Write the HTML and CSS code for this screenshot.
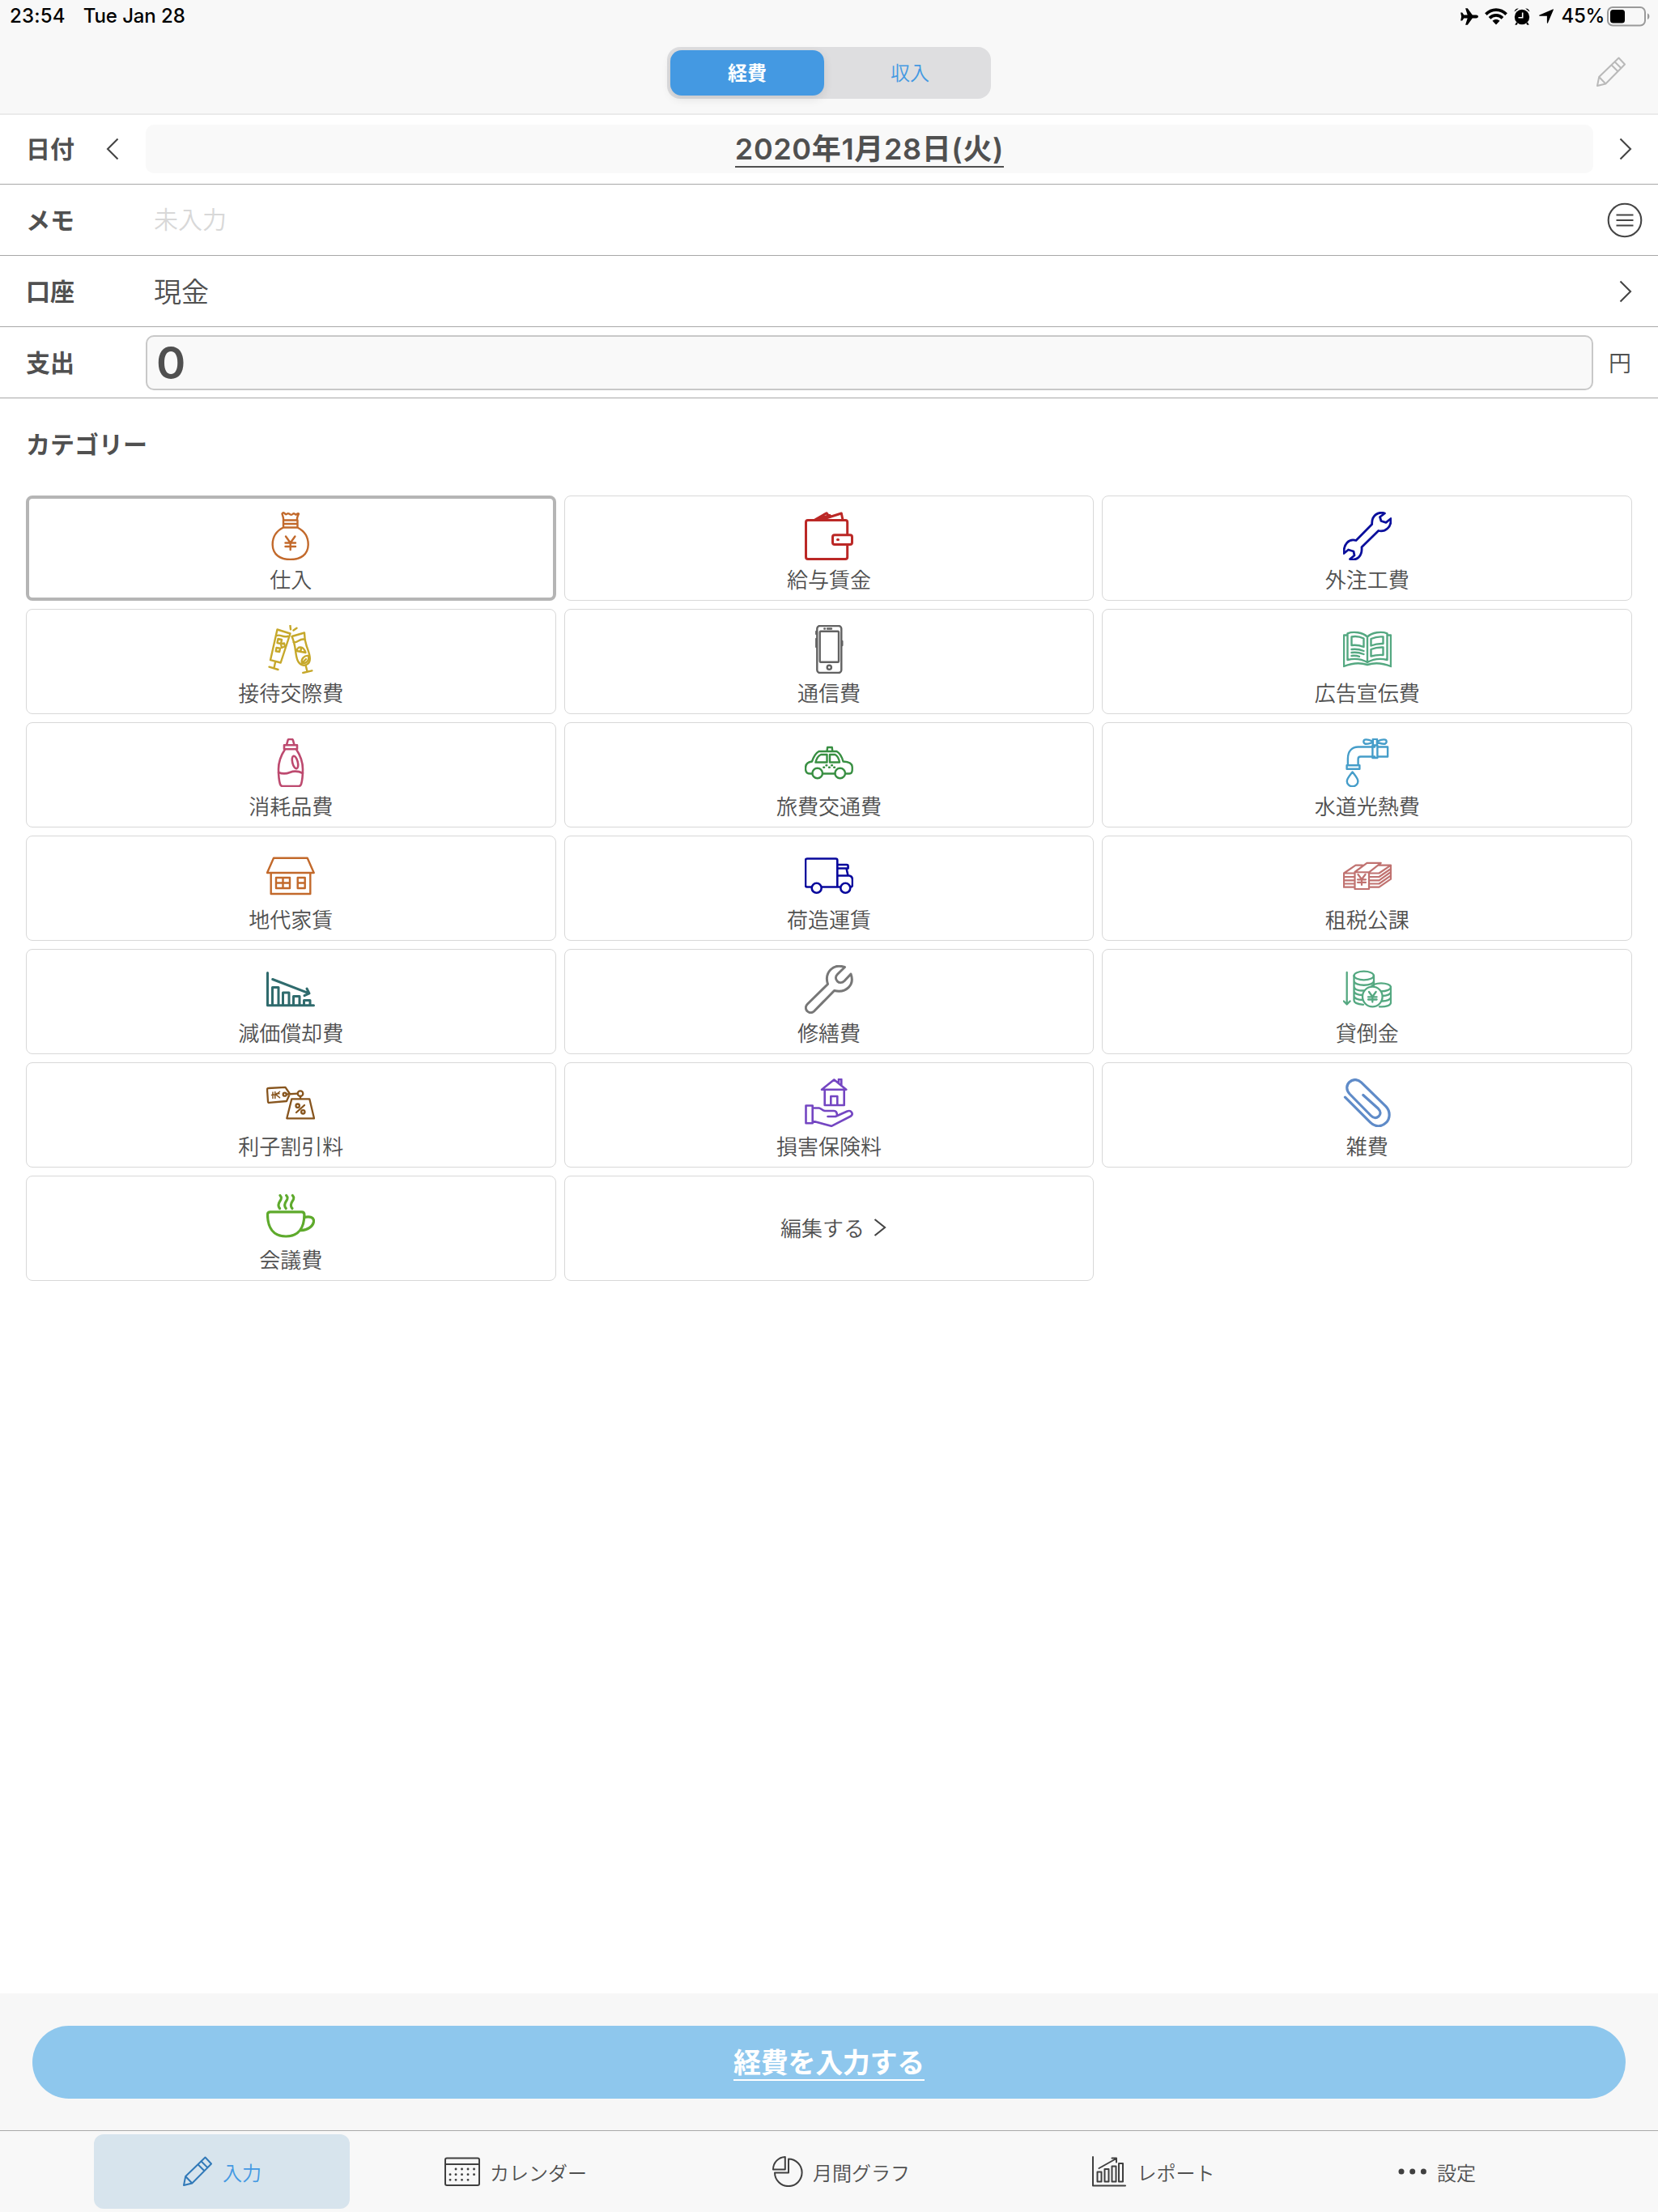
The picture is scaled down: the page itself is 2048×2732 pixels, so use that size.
FILE: index.html
```html
<!DOCTYPE html>
<html lang="ja">
<head>
<meta charset="utf-8">
<title>経費入力</title>
<link rel="stylesheet" href="styles.css">
</head>
<body>
<div class="app">
  <header class="header">
    <div class="status">
      <div class="status-left"><span class="clock">23:54</span><span class="day">Tue Jan 28</span></div>
      <div class="status-right">
        <svg class="plane" width="22" height="21" viewBox="0 0 22 21"><path d="M22 10.500c0-1.100-1.200-1.900-2.600-1.900h-4.600L8.800.3H6.100l2.600 8.300H4.300L2.200 5.500H.2l.9 5-.9 5h2l2.100-3.100h4.400l-2.600 8.300h2.700l6-8.300h4.600c1.400 0 2.600-.8 2.600-1.900z"/></svg>
        <svg class="wifi" width="28" height="21" viewBox="0 0 28 21"><g fill="none" stroke="#000" stroke-width="3.700"><path d="M1.400 7.600C8.500.3 19.500.3 26.600 7.600"/><path d="M6 12.400c4.500-4.600 11.500-4.600 16 0"/></g><path d="M9.500 15.800c2.600-2.400 6.400-2.400 9 0L14 20.600z"/></svg>
        <svg class="alarm" width="20" height="21" viewBox="0 0 20 21"><circle cx="10" cy="11" r="9.200"/><path d="M.6 4.500C.8 2 3 .1 5.800.5zM19.400 4.500C19.200 2 17 .1 14.200.5zM3 17.500l-1.700 3.300h2.200l1.500-2zM17 17.500l1.700 3.300h-2.200l-1.500-2z"/><path d="M10.700 5.500v6.300H5.500" fill="none" stroke="#fff" stroke-width="1.600"/></svg>
        <svg class="loc" width="18" height="18" viewBox="0 0 18 18"><path d="M17 .4c.7-.3 1.100.2.8.9L11 17.200c-.3.800-1.100.6-1.100-.2V9.300c0-.4-.1-.5-.5-.5H.9c-.9 0-1.100-.8-.2-1.200z"/></svg>
        <span class="percent">45%</span>
        <svg class="battery" width="54" height="25" viewBox="0 0 54 25"><rect x="1" y="1" width="46" height="22.500" rx="6" fill="none" stroke="#9a9a9a" stroke-width="2"/><rect x="4" y="4" width="18" height="16.500" rx="3.500"/><path d="M50 8.500c3.200.8 3.200 6.700 0 7.500z" fill="#9a9a9a"/></svg>
      </div>
    </div>
    <div class="nav">
      <div class="segment"><span class="seg active">経費</span><span class="seg">収入</span></div>
      <svg class="edit" width="38" height="38" viewBox="0 0 38 38"><g class="line"><path d="M2 36l2.200-11L28.500 1.500l7.500 8L12.300 33.500zM4.200 25l8.100 8.500M19.500 10.300l8 8M23.500 6.300l8 8"/></g></svg>
    </div>
  </header>

  <section class="form">
    <div class="row">
      <span class="label">日付</span>
      <svg class="prev" width="16" height="28" viewBox="0 0 16 28"><path d="M14.500 1.500L2 14l12.500 12.500"/></svg>
      <div class="date-field"><span class="date">2020年1月28日(火)</span></div>
      <svg class="next" width="16" height="28" viewBox="0 0 16 28"><path d="M1.500 1.500L14 14 1.500 26.500"/></svg>
    </div>
    <div class="row">
      <span class="label">メモ</span>
      <span class="memo">未入力</span>
      <svg class="list" width="44" height="44" viewBox="0 0 44 44"><circle cx="22" cy="22" r="20.300"/><path d="M11.500 15.500h21M11.500 22h21M11.500 28.500h21"/></svg>
    </div>
    <div class="row">
      <span class="label">口座</span>
      <span class="account">現金</span>
      <svg class="next" width="16" height="28" viewBox="0 0 16 28"><path d="M1.500 1.500L14 14 1.500 26.500"/></svg>
    </div>
    <div class="row">
      <span class="label">支出</span>
      <div class="amount">0</div>
      <span class="yen">円</span>
    </div>
  </section>

  <main class="categories">
    <h2 class="title">カテゴリー</h2>
    <div class="grid">
      <div class="card selected">
        <svg class="icon bag" viewBox="0 0 60 60"><path d="M21 10.500C21.500 7 20 5 19.500 2.500c1.500-2.500 3-.5 4 .5 1.500 1 2.500-2 4.500-.5s3 2 4.500.5 2.500-.5 3.500.5 2.500-2.500 4-1C39 5 37.500 7 38 10.500M21 10.500h17.500v9H21zM21 15h17.500M21 19.500C12 24 7.500 32 7.700 41c.3 12 9.300 18 22 18s21.700-6 22-18c.2-9-4.500-17-13.200-21.500"/><path d="M24 30.500l5.700 8 5.700-8M29.700 38.500V47M23.500 38.500h12.500M23.500 43h12.500"/></svg>
        <span>仕入</span>
      </div>
      <div class="card">
        <svg class="icon wallet" viewBox="0 0 60 60"><rect x="1.500" y="10.500" width="51.200" height="48" rx="2.500"/><path d="M13 9.700L27 1.700l2.500 3.500M21 9.700l24.300-7.700L47 10M18 8.500L31 4.500"/><rect class="paper" x="34.500" y="28.700" width="24" height="11.800" rx="2.500"/><path d="M40.500 34.500h1"/></svg>
        <span>給与賃金</span>
      </div>
      <div class="card">
        <svg class="icon spanner" viewBox="0 0 60 60"><path d="M51.500 2C44-.5 35 4 35.700 15.500L16 35.500C7 33 .5 40 1 51.500l5.500-4.500 6.500 2 1 5-5.500 4.500C17 61 24 55 23 43.700l20.700-20.200C52 25.500 60 19 59 8.500l-6 4.800-6-1.800-1.500-5z"/></svg>
        <span>外注工費</span>
      </div>

      <div class="card">
        <svg class="icon drinks" viewBox="0 0 60 60"><path d="M13.500 5.500l16 5-11.800 36L5 43.200zM11 46l-1.500 7M3.500 51.700l11 3.300M13 13c5-2 7 3 13.500.8"/><path d="M14.500 17l4.500 1-1 5-4.500-1zM18 23.500l4-1 1 4-4 1.500zM12.500 28l4.500.8-.8 4.200-4.500-.8z"/><path d="M31.500 14L47 9.500c0 6 .3 10 2.700 16.500 3 8 6.800 18 1.300 22-6 4.500-12 0-13.800-9-1.700-8-1.200-15-5.700-25zM33.500 21c5 2 8-6 14.500-3M48.700 50l1.800 7.500M45.300 59l11-2.700"/><path d="M37.500 32c1-6 8-7 11 2zM42.500 32l.5-4M44 47c-1.500-5 3-10 8-9 1.500 6-3 10-8 9l5-5"/><path d="M29.500.8l.5 4.500M33.500 6.500l4-2.800"/></svg>
        <span>接待交際費</span>
      </div>
      <div class="card">
        <svg class="icon phone" viewBox="0 0 60 60"><rect x="15.300" y="1" width="30" height="58" rx="3.500"/><rect x="18.700" y="7.800" width="23.300" height="38" rx="1"/><circle cx="30.300" cy="52.300" r="2.600"/><path d="M28 4.500h5M24.300 4.500h.6M14.300 8v3M14.300 17v10M46.300 20v5"/></svg>
        <span>通信費</span>
      </div>
      <div class="card">
        <svg class="icon book" viewBox="0 0 60 60"><path d="M5.500 12.500H1V51c10-4 21-4.500 29-2 8-2.500 19-2 29 2V12.500h-4.500M5.500 10.300C13 7.500 24 9 30 14.500V46c-7-4-16-5-24.500-3zM54.500 10.300C47 7.500 36 9 30 14.500V46c7-4 16-5 24.500-3z"/><path d="M10.500 14.500c5-1 10-.3 15 2v10.500c-5-2-10-2.700-15-2zM10.500 30c5-.8 10 0 15 2M10.500 34c5-.8 10 0 15 2M10.500 38c4-.5 7 0 9.500.8M49.500 14.500c-5-.5-10 .3-15 2.500v8.500c5-2 10-2.700 15-2.500zM49.500 27.500c-5-.3-10 .5-15 2.500v8.500c5-1.500 10-1.800 15-1.500z"/></svg>
        <span>広告宣伝費</span>
      </div>

      <div class="card">
        <svg class="icon bottle" viewBox="0 0 60 60"><path d="M25 8l1.500-5.500Q27 1 28 1h3.500q1 0 1.500 1.500L34.500 8M22 8.300h16v4.900H22zM23 13.500C18 21 15 28 15 38c0 8 .3 13 2 18.500Q18 59 20 59h20q2 0 3-2.500c1.700-5.500 2-10.500 2-18.500 0-10-3-17-8-24.500"/><ellipse cx="35.500" cy="29.500" rx="3.300" ry="8" transform="rotate(-14 35.500 29.500)"/><path d="M15 42c5 2 9 2 14 0s10-2 16 1"/></svg>
        <span>消耗品費</span>
      </div>
      <div class="card">
        <svg class="icon taxi" viewBox="0 0 60 60"><path d="M9.300 43.500H6.500C2 43.500 1 41 1 37c0-5 2-8 8-8.500 2-6 4-10 8.500-12.500h22C44 18.500 46 23 47.500 28.500c6 .3 11 2 11.200 6.500.3 5 0 8.500-3.700 8.500h-4.700M22 43.500h15.500M27.500 16l.6-5h5.600l.6 5"/><path d="M27.500 20H20c-3.500 1.500-5.500 5.500-6.500 9.500h14zM31 20h6.500c3 1.500 4.800 5.500 5.500 9.500H31z"/><circle cx="15.700" cy="43" r="6.300"/><circle cx="43.700" cy="43" r="6.300"/><path d="M23.300 35.700h.8M26.500 33.300h.8M30 35.700h.8M33.200 33.300h.8M36.200 35.700h.8"/></svg>
        <span>旅費交通費</span>
      </div>
      <div class="card">
        <svg class="icon faucet" viewBox="0 0 60 60"><path d="M2.300 33V25C2.300 15 8 10.500 15 10.500h20.500M15 33v-7.500q0-3 3-3h17.500M32.800 8.500h6v15.500h-6zM38.800 10.500h12.700v12H38.800zM1 33.200h15.800v4.600H1zM33.300.9h5v7.600h-5zM33 3.500C28 1.500 24.300.3 22.300 2.200c-1 1.500-.5 3.500 1 4.300 3 1 5.700-.5 9.700-1.500M38.500 3.500c5-2 9-3.200 11-1.300 1 1.500.5 3.500-1 4.300-3 1-6-.5-10-1.500M8 41.500C4.200 46.500 1.200 49.500 1.200 53A6.800 6.300 0 0 0 14.800 53C14.800 49.500 11.800 46.500 8 41.500z" transform="translate(3.600)"/></svg>
        <span>水道光熱費</span>
      </div>

      <div class="card">
        <svg class="icon house" viewBox="0 0 60 60"><path d="M9 7.700h41.700l8 18.300H1zM5.700 26v26h48.600V26M12 32h17v13H12zM20.500 32v13M12 38.500h17M38.700 32h9v13h-9zM38.700 38.500h9"/></svg>
        <span>地代家賃</span>
      </div>
      <div class="card">
        <svg class="icon truck" viewBox="0 0 60 60"><path d="M8.500 43.500H3q-2 0-2-2v-31q0-2 2-2h35.300q2 0 2 2v33M21 43.500h23M40.300 16h11.500q1.800 0 1.800 2v2.500H40.300M51.500 20.500l2 9M40.300 29.500h14.500Q59 30 59 35v5q0 3.500-2 3.500"/><circle cx="14.700" cy="44.800" r="6"/><circle cx="50.300" cy="44.800" r="6"/></svg>
        <span>荷造運賃</span>
      </div>
      <div class="card">
        <svg class="icon cash" viewBox="0 0 60 60"><path d="M14 26.500H1L15.500 16.700H24M1 26.500v17.200h13M1 31h13M1 35.300h13M1 39.500h13M14.500 25L29.500 13.800h17.200L32 25.300zM14.500 25v21H32V25.300M32 26.500h12.500L59 16.700H43M32 31h12.500L59 21M32 35.300h12.500L59 25M32 39.500h12.500L59 29.300M32 43.700h12.500L59 33.700v-17"/><path d="M18.500 28l4.500 6 4.500-6M23 34v7M18 34.300h10M18 37.800h10"/></svg>
        <span>租税公課</span>
      </div>

      <div class="card">
        <svg class="icon chart" viewBox="0 0 60 60"><path d="M1.500 9.500v40.300h57M7.500 49.500v-22h7.500v22M20.500 49.500V34H28v15.500M33.500 49.500v-11H41v11M46.500 49.500v-6H54v6M7.700 17.500l45 17.300M50 29l3 6-6 2.700"/></svg>
        <span>減価償却費</span>
      </div>
      <div class="card">
        <svg class="icon repair" viewBox="0 0 60 60"><path d="M49.500 2.500C35-2.500 24 9 28.500 23.500L3.500 48c-3 3-2.500 6.500-.5 8.800 2.500 2.500 6 2.500 8.500.2l25-25.500C51 35 62 24.500 57 11l-8 8.500c-3 3-6.500 2.500-8.800.3-2.200-2.300-2.500-5.800.3-8.600z"/></svg>
        <span>修繕費</span>
      </div>
      <div class="card">
        <svg class="icon coins" viewBox="0 0 60 60"><path d="M4.700 9v39M.8 44.500l3.900 4 3.900-4"/><ellipse cx="25.700" cy="13" rx="12.200" ry="5.300"/><path d="M13.500 13v30.500c0 3 5 5 11.500 5.300M38 13v12M13.500 19.500c0 7 24.500 7 24.500 0M13.500 26c0 5 8 6.500 15 4.800M13.500 32c0 3 5 5 10 5M13.500 38c0 3 5 5 10 5"/><ellipse cx="47" cy="27.300" rx="12" ry="5"/><path d="M59 27.300V46c0 4-7 6-14 5.300M59 33c0 3-5 5-10.500 5M59 39.500c0 3-5 5-10.500 5"/><circle class="paper" cx="36.300" cy="39" r="12.300"/><path d="M32 33l4.300 6 4.300-6M36.300 39v6.500M31 39.300h10.600M31 42.500h10.600"/></svg>
        <span>貸倒金</span>
      </div>

      <div class="card">
        <svg class="icon tags" viewBox="0 0 60 60"><path d="M1 13.500Q1 12 2.500 12l21-1.200L29 19l-4 9-21.500 1.800Q2 30 2 28.500zM25 19.500l14-.8M42 22v3M31.300 25.300h22L59 49.300H25.300z"/><circle cx="22.700" cy="19.700" r="2"/><circle cx="42" cy="18.700" r="3.300"/><path class="thin" d="M6.500 20.500l5.500-.4M8 17v7.500M10.800 16.500v8M12 20.200l4.500-4M12 20.200l4.500 3.500M12.500 18.500l3.500.2"/><circle cx="38.700" cy="33.700" r="2.200"/><circle cx="45.300" cy="41.300" r="2.200"/><path d="M47 33L37 42"/></svg>
        <span>利子割引料</span>
      </div>
      <div class="card">
        <svg class="icon insure" viewBox="0 0 60 60"><path d="M21 13.700L36.300 1.500l15 12.200zM24.700 14v19h24V14M32.300 33V22h8v11M42 5V1h3.300v7.500M1.500 33.500h8.200v21.800H1.500zM9.700 36.500h8c3 .5 4 3 7 3.500H36c3 0 4 3 4 6M28.500 47H38l14.500-6.500c5-2 8 3.500 4.500 6L33 58.800 9.700 52.500"/></svg>
        <span>損害保険料</span>
      </div>
      <div class="card">
        <svg class="icon clip" viewBox="0 0 60 60"><path d="M2.500 23.200l31 31c6 6 14 6 19.500.5s5.500-14 0-20L22.500 4.800C18 .5 12 .5 7.800 4.500s-4 10 .2 14.500L34.500 46c3.500 3.500 7 3 9.500.8s3-6-.5-9.500L24.800 20.500"/></svg>
        <span>雑費</span>
      </div>

      <div class="card">
        <svg class="icon cup" viewBox="0 0 60 60"><path d="M1.500 28q0-3.200 3.200-3.200h39q3.200 0 3.200 3.200c0 16-7 27-22.700 27S1.500 44 1.500 28zM47 31.500c7-2 12 .5 11.500 5-.5 6-8 11.500-16.500 11M17 4.500c4.500 5-2.500 7-2 12 0 1.500.5 3 1.500 4M24.700 4.500c4.500 5-2.500 7-2 12 0 1.500.5 3 1.500 4M32.400 4.500c4.500 5-2.500 7-2 12 0 1.500.5 3 1.500 4"/></svg>
        <span>会議費</span>
      </div>
      <div class="card more">
        <span>編集する</span>
        <svg class="chevron" width="16" height="24" viewBox="0 0 16 24"><path d="M1.500 2L14 12 1.500 22"/></svg>
      </div>
    </div>
  </main>

  <footer class="footer">
    <div class="submit-bar"><div class="submit"><span>経費を入力する</span></div></div>
    <nav class="tabs">
      <div class="tab current">
        <svg width="38" height="38" viewBox="0 0 38 38"><g class="line"><path d="M2 36l2.200-11L28.500 1.500l7.500 8L12.300 33.500zM4.200 25l8.100 8.500M19.500 10.300l8 8M23.500 6.300l8 8"/></g></svg>
        <span>入力</span>
      </div>
      <div class="tab calendar">
        <svg width="44" height="38" viewBox="0 0 44 38"><rect class="line" x="1" y="2.500" width="42" height="33.500" rx="2"/><path class="line" d="M1 10h42"/><path class="dots" d="M14 16h.1M21.500 16h.1M29 16h.1M36.500 16h.1M7 22.700h.1M14 22.700h.1M21.500 22.700h.1M29 22.700h.1M36.500 22.700h.1M7 29.300h.1M14 29.300h.1M21.500 29.300h.1M29 29.300h.1"/></svg>
        <span>カレンダー</span>
      </div>
      <div class="tab pie">
        <svg width="38" height="38" viewBox="0 0 38 38"><g class="line"><path d="M20 3.500a16.800 16.800 0 1 1-17 17h17z"/><path d="M15.800 1v15.500H1C1 8 7.500 1.300 15.800 1z"/></g></svg>
        <span>月間グラフ</span>
      </div>
      <div class="tab report">
        <svg width="42" height="38" viewBox="0 0 42 38"><g class="line"><path d="M1 1v35.500h40M6.500 19.500h5v12h-5zM15.500 16h5v15.500h-5zM24.500 12.500h5v19h-5zM33 9h5v22.500h-5zM8.500 15L29 3.500M24.500 2.500h5.500v5"/></g></svg>
        <span>レポート</span>
      </div>
      <div class="tab settings">
        <svg width="36" height="38" viewBox="0 0 36 38"><g fill="#404040"><circle cx="4" cy="19" r="3.500"/><circle cx="17.700" cy="19" r="3.500"/><circle cx="31.400" cy="19" r="3.500"/></g></svg>
        <span>設定</span>
      </div>
    </nav>
  </footer>
</div>
</body>
</html>
```

FILE: styles.css
```css
* { box-sizing: border-box; }
body {
  margin: 0;
  background: #fff;
  color: #505050;
  font-family: "Noto Sans CJK JP", sans-serif;
}
svg { display: block; flex: none; }
.app {
  width: 2048px;
  height: 2732px;
  display: flex;
  flex-direction: column;
  overflow: hidden;
}

/* Header */
.header {
  height: 142px;
  flex: none;
  background: #f8f8f8;
  border-bottom: 2px solid #ebebeb;
}
.status {
  height: 40px;
  padding: 0 9px 0 12px;
  display: flex;
  justify-content: space-between;
  align-items: center;
  color: #000;
  font: 500 24px/40px "Inter", sans-serif;
}
.status-left, .status-right { display: flex; align-items: center; }
.clock { letter-spacing: 0.2px; }
.day { margin-left: 22px; letter-spacing: -0.1px; }
.plane { margin-right: 8px; }
.wifi { margin-right: 8px; }
.alarm { margin-right: 11px; }
.loc { margin-right: 9px; }
.percent { margin-right: 3px; letter-spacing: -0.3px; }
.nav {
  height: 100px;
  padding: 18px 39px 0 824px;
  display: flex;
  justify-content: space-between;
}
.segment {
  width: 400px;
  height: 64px;
  padding: 4px;
  display: flex;
  border-radius: 16px;
  background: #dedee0;
}
.seg {
  width: 190px;
  margin-left: 11px;
  font-size: 24px;
  font-weight: 350;
  line-height: 54px;
  text-align: center;
  color: #4499e2;
}
.seg.active {
  margin-left: 0;
  border-radius: 14px;
  background: #4499e2;
  color: #fff;
  font-weight: 700;
  box-shadow: 0 4px 12px rgba(0, 0, 0, 0.1);
}
.edit { margin-top: 12px; }
.edit .line { stroke: #b9b9b9; }
.line {
  fill: none;
  stroke: #404040;
  stroke-width: 2;
  stroke-linejoin: round;
  stroke-linecap: round;
}

/* Form rows */
.row {
  height: 88px;
  display: flex;
  align-items: center;
  border-bottom: 1px solid #a8a8a8;
}
.row:first-child { height: 86px; padding-bottom: 2px; }
.label {
  width: 99px;
  margin: -4px 0 0 32px;
  flex: none;
  font-size: 30px;
  font-weight: 700;
  line-height: 40px;
}
.prev { margin-right: 33px; }
.prev, .next, .list, .chevron { fill: none; stroke: #444; stroke-width: 2.1; }
.next { margin: 0 32px 0 auto; }
.date-field {
  width: 1788px;
  height: 60px;
  flex: none;
  border-radius: 10px;
  background: #f9f9f9;
  text-align: center;
}
.date {
  display: inline-block;
  height: 53px;
  border-bottom: 2px solid #505050;
  font: 600 36px/60px "Inter", "Noto Sans CJK JP", sans-serif;
  letter-spacing: 0.65px;
}
.memo {
  margin: -5px 0 0 59px;
  font-size: 30px;
  font-weight: 350;
  color: #d8d8d8;
}
.list { margin: 0 19px 0 auto; }
.account { margin: -2px 0 0 59px; font-size: 34px; font-weight: 350; }
.amount {
  width: 1788px;
  height: 68px;
  margin-left: 49px;
  padding-left: 11px;
  flex: none;
  border: 2px solid #c8c8c8;
  border-radius: 10px;
  background: #f9f9f9;
  font: 600 55px/64px "Inter", sans-serif;
}
.yen { margin: -2px 0 0 19px; font-size: 28px; font-weight: 350; }

/* Categories */
.categories { flex: 1; padding: 0 32px; }
.title {
  height: 120px;
  margin: 0;
  font-size: 30px;
  line-height: 110px;
}
.grid {
  display: grid;
  grid-template-columns: repeat(3, 1fr);
  grid-auto-rows: 130px;
  gap: 10px;
}
.card {
  padding-top: 19px;
  display: flex;
  flex-direction: column;
  align-items: center;
  border: 1px solid #d8d8d8;
  border-radius: 8px;
  font-size: 26px;
  font-weight: 350;
  line-height: 40px;
}
.card span { margin-top: 3px; }
.card.selected { padding-top: 16px; border: 4px solid #b5b5b5; }
.card.more {
  padding: 0 0 2px 11px;
  flex-direction: row;
  justify-content: center;
  gap: 11px;
}
.card.more span { margin: 0; }
.icon {
  width: 60px;
  height: 60px;
  fill: none;
  stroke: currentColor;
  stroke-width: 2.4;
  stroke-linecap: round;
  stroke-linejoin: round;
}
.icon .paper { fill: #fff; }
.icon .thin { stroke-width: 1.5; }
.bag, .house { color: #c2692b; }
.wallet { color: #bb2826; stroke-width: 3; }
.spanner { color: #0a0f9c; stroke-width: 2.8; }
.drinks { color: #c6a82b; }
.phone { color: #626262; }
.book { color: #54a881; }
.bottle { color: #bd4a6f; stroke-width: 2.6; }
.taxi { color: #388f42; }
.faucet { color: #459dc9; }
.truck { color: #08089c; stroke-width: 2.6; }
.cash { color: #c07270; stroke-width: 2.2; }
.chart { color: #2f6b6d; stroke-width: 3; }
.repair { color: #777; stroke-width: 3; }
.coins { color: #54a881; stroke-width: 2.3; }
.tags { color: #87551e; stroke-width: 2.3; }
.insure { color: #7446c2; stroke-width: 2.6; }
.clip { color: #5f8bc8; stroke-width: 3.2; }
.cup { color: #5eaa2c; stroke-width: 3.2; }

/* Footer */
.footer { flex: none; background: #f7f7f7; }
.submit-bar { height: 169px; padding: 40px 40px 0; }
.submit {
  height: 90px;
  border-radius: 45px;
  background: #8ec7ed;
  color: #fff;
  text-align: center;
}
.submit span {
  display: inline-block;
  height: 68px;
  border-bottom: 2px solid #fff;
  font-size: 34px;
  font-weight: 700;
  line-height: 87px;
  letter-spacing: -0.3px;
}
.tabs {
  height: 101px;
  padding: 4px 0 4px 116px;
  display: grid;
  grid-template-columns: 316px 410px 394px 374px 330px;
  border-top: 1px solid #a9a9a9;
  background: #f8f8f8;
}
.tab {
  display: flex;
  justify-content: center;
  align-items: center;
  gap: 12px;
  font-size: 24px;
  font-weight: 350;
}
.tab.current {
  border-radius: 12px;
  background: #d7e4ed;
  color: #4499e2;
}
.current .line { stroke: #3179b8; }
.dots { fill: none; stroke: #404040; stroke-width: 2.8; stroke-linecap: round; }
.report { gap: 14px; padding-left: 3px; }
```
